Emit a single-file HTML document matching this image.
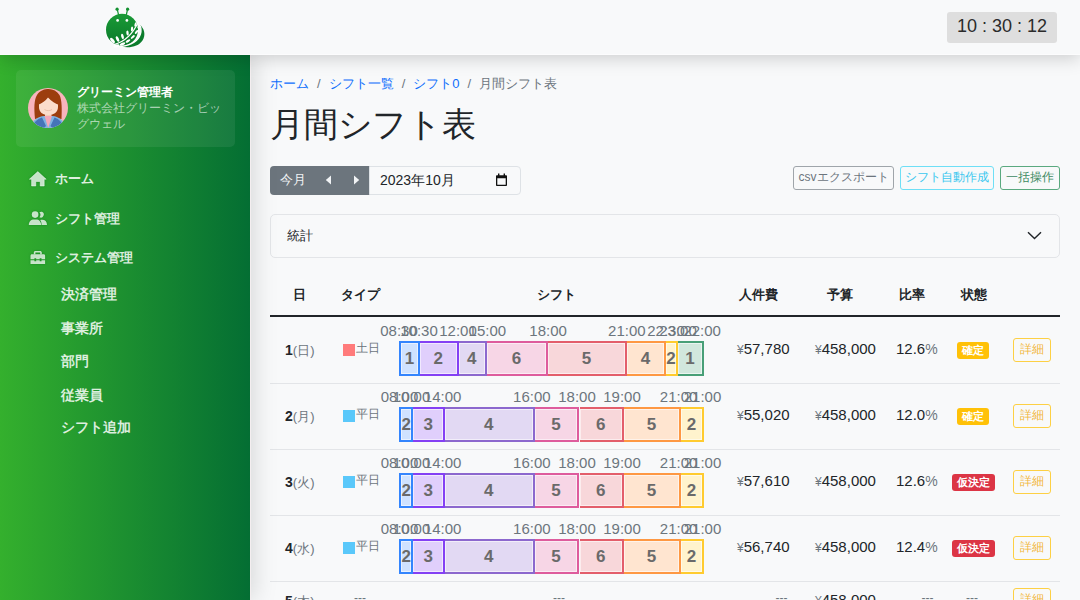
<!DOCTYPE html>
<html><head><meta charset="utf-8">
<style>
*{box-sizing:border-box;margin:0;padding:0}
html,body{width:1080px;height:600px;overflow:hidden}
body{position:relative;background:#f8f9fa;font-family:"Liberation Sans",sans-serif;color:#212529}
.abs{position:absolute}
.nw{white-space:nowrap}
#hdr{left:0;top:0;width:1080px;height:55px;background:#f8f9fa;z-index:5;box-shadow:0 4px 16px rgba(0,0,0,.17);border-bottom:1px solid #fcfcfd}
#clock{left:947px;top:12px;width:110px;height:31px;background:#dedede;border-radius:3px;font-size:18px;color:#2b2b2b;line-height:29px;text-align:center}
#side{left:0;top:55px;width:251px;height:545px;background:linear-gradient(to right,#34b02d,#046e33 250px,#f4eef0 250px);z-index:4;box-shadow:4px 0 22px rgba(0,0,0,.13)}
#card{left:16px;top:15px;width:219px;height:77px;background:rgba(255,255,255,.07);border-radius:5px}
.nm{left:77px;top:29px;font-size:12px;font-weight:bold;color:#fff;white-space:nowrap;line-height:16px}
.co{left:77px;top:45px;font-size:12px;color:rgba(255,255,255,.6);line-height:16px;width:150px}
.mi{left:55px;font-size:13px;font-weight:bold;color:rgba(255,255,255,.85);white-space:nowrap;line-height:16px}
.sm{left:61px;font-size:13.5px;font-weight:bold;color:rgba(255,255,255,.85);white-space:nowrap;line-height:16px}
.ic{left:29px}
.bc{font-size:13px;white-space:nowrap;line-height:18px}
.bc a{color:#0d6efd;text-decoration:none}
.bc .sep{color:#6c757d;padding:0 8px}
.bc .cur{color:#6c757d}
h1{position:absolute;left:270px;top:103px;font-size:34px;letter-spacing:-0.25px;font-weight:normal;line-height:42px;color:#212529;white-space:nowrap}
.bg{left:270px;top:166px;width:100px;height:29px;background:#6c757d;border-radius:4px 0 0 4px}
.din{left:369px;top:166px;width:152px;height:29px;background:#f8f9fa;border:1px solid #dee2e6;border-radius:0 4px 4px 0}
.ob{top:166px;height:24px;border:1px solid;border-radius:3px;font-size:12px;line-height:20px;text-align:center;white-space:nowrap;background:transparent}
.acc{left:270px;top:214px;width:790px;height:44px;border:1px solid #e3e5e8;border-radius:5px;background:#f8f9fa}
.th{top:287px;font-size:13px;font-weight:bold;line-height:16px;white-space:nowrap;color:#212529}
.rl{left:270px;width:790px;height:1px;background:#e3e5e8}
.bar{height:35px;border:2px solid;box-shadow:inset 0 0 0 1px rgba(255,255,255,.55);font-size:17px;font-weight:bold;color:#6a6a6a;text-align:center;line-height:31px;overflow:hidden;white-space:nowrap}
.tl{font-size:15px;color:#6c757d;line-height:16px;white-space:nowrap;transform:translateX(-50%)}
.day{font-size:14px;line-height:16px;white-space:nowrap}
.day b{color:#212529}
.day span{color:#6c757d;font-size:13px}
.typ{font-size:12px;line-height:14px;color:#6c757d;white-space:nowrap}
.sq{width:12px;height:12px}
.num{font-size:15px;line-height:16px;white-space:nowrap;color:#212529}
.num .y{font-size:12px;color:#6c757d;margin-right:0}
.num .p{color:#6c757d;font-size:14px}
.bdg{height:17px;border-radius:3px;font-size:11px;font-weight:bold;color:#fff;text-align:center;line-height:17px;white-space:nowrap}
.det{width:38px;height:24px;border:1px solid rgba(255,193,7,.75);border-radius:3px;font-size:12px;color:rgba(240,165,0,.8);text-align:center;line-height:21px}
.dash{font-size:12px;color:#6c757d;line-height:14px}
</style></head><body>
<div id="hdr" class="abs">
<svg class="abs" style="left:100px;top:2px" width="50" height="50" viewBox="0 0 50 50">
<defs><linearGradient id="lg" x1="0" y1="0" x2="0" y2="1"><stop offset="0" stop-color="#1a9a36"/><stop offset="1" stop-color="#0a7a2b"/></linearGradient></defs>
<circle cx="22" cy="27.8" r="17" fill="#fff" opacity=".7"/>
<line x1="17.4" y1="8" x2="18.6" y2="13" stroke="#139130" stroke-width="1.2"/>
<line x1="27.4" y1="8" x2="26.3" y2="13" stroke="#139130" stroke-width="1.2"/>
<circle cx="17.1" cy="7.2" r="1.6" fill="#139130"/><circle cx="27.6" cy="7.2" r="1.6" fill="#139130"/>
<circle cx="22" cy="27.8" r="16" fill="url(#lg)"/>
<path d="M39.5 22.5 C44.5 26.5 46 33 42.5 38.5 C38.5 44.5 30 46.5 21 44.6 C31 43 38.5 38.5 40.5 32 C41.5 28.5 41 25 39.5 22.5Z" fill="#0b7c2c"/>
<path d="M39.5 22.5 C41 25 41.5 28.5 40.5 32 C38.5 38.5 31 43 21 44.6" stroke="#fff" stroke-width="1.2" fill="none"/>
<circle cx="17.6" cy="18.4" r="1.35" fill="#fff"/><circle cx="26.9" cy="18.4" r="1.35" fill="#fff"/>
<path d="M14 42.5 C22 40.5 32 34 38.5 19.5" stroke="#fff" stroke-width="1.2" fill="none"/>
<g fill="#fff">
<ellipse cx="12.5" cy="38.5" rx="1.5" ry="3.2" transform="rotate(-40 12.5 38.5)"/>
<ellipse cx="17.5" cy="37" rx="1.4" ry="3" transform="rotate(-25 17.5 37)"/>
<ellipse cx="22.5" cy="34.5" rx="1.3" ry="2.8" transform="rotate(-15 22.5 34.5)"/>
<ellipse cx="27.5" cy="31" rx="1.2" ry="2.6" transform="rotate(-5 27.5 31)"/>
<ellipse cx="32" cy="27" rx="1.1" ry="2.4" transform="rotate(5 32 27)"/>
<ellipse cx="35.5" cy="22.5" rx="1" ry="2.2" transform="rotate(15 35.5 22.5)"/>
<ellipse cx="16.5" cy="43.8" rx="1.4" ry="3.2" transform="rotate(75 16.5 43.8)"/>
<ellipse cx="22.5" cy="42" rx="1.3" ry="3" transform="rotate(65 22.5 42)"/>
<ellipse cx="28" cy="39" rx="1.2" ry="2.7" transform="rotate(58 28 39)"/>
<ellipse cx="32.8" cy="35" rx="1.1" ry="2.5" transform="rotate(50 32.8 35)"/>
<ellipse cx="36.5" cy="30" rx="1" ry="2.3" transform="rotate(42 36.5 30)"/>
<ellipse cx="38.8" cy="24.5" rx="0.9" ry="2" transform="rotate(35 38.8 24.5)"/>
</g>
</svg>
<div id="clock" class="abs">10 : 30 : 12</div>
</div>
<div id="side" class="abs">
<div id="card" class="abs"></div>
<svg class="abs" style="left:28px;top:33px" width="40" height="40" viewBox="0 0 40 40">
<defs><clipPath id="cc"><circle cx="20" cy="20" r="20"/></clipPath></defs>
<g clip-path="url(#cc)">
<rect width="40" height="40" fill="#f8b4bd"/>
<path d="M7 31 C6 20 6 12 9 7 C12 2 17 1 20.5 1 C25 1 29 3 31.5 7 C34 12 34 21 33.5 31 L28 30 L12 30Z" fill="#9c3d0e"/>
<rect x="17" y="23" width="6.5" height="7" fill="#f5cdb8"/>
<path d="M2 40 C4 32 10 28.5 16 28 L24.5 28 C30.5 28.5 36 32 38 40 Z" fill="#7fb2e2"/>
<path d="M16.5 28 L20.2 40 L24 28 Z" fill="#f4a6b8"/>
<path d="M4 40 C5 35 9 31 14 29.5 L18 38 L16 40Z M36 40 C35 35 31 31 26.5 29.5 L22.5 38 L24.5 40Z" fill="#4574b8"/>
<path d="M11 14 C11 8 15 5.5 20.3 5.5 C25.5 5.5 30 8 30 14 L30 19 C30 24 26 27 20.3 27 C14.5 27 11 24 11 19Z" fill="#fbdccb"/>
<path d="M9.5 17 C9.5 8 14 3.5 20.5 3.5 C27 3.5 31.5 8 31.5 17 C28 16 23 13 20 9.5 C17.5 13 13.5 15.5 9.5 17Z" fill="#9c3d0e"/>
<path d="M16.5 21.5 C18.5 23 22 23 24 21.5" stroke="#e8b9a0" stroke-width=".8" fill="none"/>
</g></svg>
<div class="abs nm">グリーミン管理者</div>
<div class="abs co">株式会社グリーミン・ビッグウェル</div>
<svg class="abs" style="left:28px;top:115px;filter:drop-shadow(0 0 1px rgba(0,110,20,.7))" width="20" height="18" viewBox="28 170 20 18"><path d="M37.8 171.6 L46.2 179.2 L44.2 179.2 L44.2 186 L40.2 186 L40.2 181.5 L35.8 181.5 L35.8 186 L31.6 186 L31.6 179.2 L29.4 179.2 Z" fill="rgba(255,255,255,.76)" stroke="rgba(255,255,255,.76)" stroke-width=".6" stroke-linejoin="round"/></svg>
<svg class="abs" style="left:28px;top:155px;filter:drop-shadow(0 0 1px rgba(0,110,20,.7))" width="20" height="17" viewBox="28 210 20 17"><g fill="rgba(255,255,255,.76)"><circle cx="35.1" cy="214.6" r="3.3"/><path d="M42 211.8 A2.8 2.8 0 1 1 39.5 217.3 A4.2 4.2 0 0 0 39.5 212.2 A2.8 2.8 0 0 1 42 211.8Z"/><path d="M28.8 225 C28.8 221.5 31 219.5 34 219.5 L36 219.5 C39 219.5 41.1 221.5 41.1 225Z"/><path d="M41.6 225 C41.6 222.5 41 221 40.2 219.9 C40.8 219.7 41.3 219.7 42.2 219.7 C45 219.7 47 221.5 47 225Z"/></g></svg>
<svg class="abs" style="left:28px;top:194px;filter:drop-shadow(0 0 1px rgba(0,110,20,.7))" width="20" height="17" viewBox="28 248 20 17"><g fill="rgba(255,255,255,.76)"><path d="M33.8 253.3 L33.8 251.8 C33.8 250.6 34.5 250 35.6 250 L40 250 C41.1 250 41.8 250.6 41.8 251.8 L41.8 253.3 L40.2 253.3 L40.2 251.5 L35.4 251.5 L35.4 253.3Z"/><path d="M32 253.2 L43.6 253.2 C44.6 253.2 45.1 253.8 45.1 254.8 L45.1 258.2 L41.5 258.2 L41.5 257.2 L39.7 257.2 L39.7 258.2 L36.2 258.2 L36.2 257.2 L34.4 257.2 L34.4 258.2 L30.5 258.2 L30.5 254.8 C30.5 253.8 31 253.2 32 253.2Z"/><path d="M30.5 259.2 L34.4 259.2 L34.4 260.2 L36.2 260.2 L36.2 259.2 L39.7 259.2 L39.7 260.2 L41.5 260.2 L41.5 259.2 L45.1 259.2 L45.1 263 L30.5 263Z"/></g></svg>
<div class="abs mi" style="top:116px">ホーム</div>
<div class="abs mi" style="top:155.5px">シフト管理</div>
<div class="abs mi" style="top:195px">システム管理</div>
<div class="abs sm" style="top:231.5px">決済管理</div>
<div class="abs sm" style="top:265.5px">事業所</div>
<div class="abs sm" style="top:299px">部門</div>
<div class="abs sm" style="top:332.5px">従業員</div>
<div class="abs sm" style="top:364.5px">シフト追加</div>
</div>
<div class="abs bc" style="left:270px;top:75px"><a>ホーム</a><span class="sep">/</span><a>シフト一覧</a><span class="sep">/</span><a>シフト0</a><span class="sep">/</span><span class="cur">月間シフト表</span></div>
<h1>月間シフト表</h1>
<div class="abs bg"></div>
<div class="abs nw" style="left:280px;top:172px;font-size:13px;color:#f1f3f5;line-height:16px">今月</div>
<svg class="abs" style="left:325px;top:175px" width="7" height="10" viewBox="0 0 7 10"><path d="M6 0.5 L6 9.5 L0.8 5Z" fill="#f1f3f5"/></svg>
<svg class="abs" style="left:353px;top:175px" width="7" height="10" viewBox="0 0 7 10"><path d="M1 0.5 L1 9.5 L6.2 5Z" fill="#f1f3f5"/></svg>
<div class="abs din"></div>
<div class="abs nw" style="left:380px;top:172px;font-size:14px;color:#212529;line-height:16px">2023年10月</div>
<svg class="abs" style="left:495px;top:173px" width="13" height="14" viewBox="0 0 13 14"><path d="M1 3.2 C1 2.6 1.5 2.2 2 2.2 L11 2.2 C11.5 2.2 12 2.6 12 3.2 L12 12 C12 12.6 11.5 13 11 13 L2 13 C1.5 13 1 12.6 1 12Z M2.3 5.3 L2.3 11.7 L10.7 11.7 L10.7 5.3Z" fill="#111" fill-rule="evenodd"/><rect x="3" y="0.5" width="1.4" height="2.5" fill="#111"/><rect x="8.6" y="0.5" width="1.4" height="2.5" fill="#111"/></svg>
<div class="abs ob" style="left:793px;width:101px;border-color:#9fa5aa;color:#6c757d">csvエクスポート</div>
<div class="abs ob" style="left:900px;width:94px;border-color:#6edff6;color:#3cc8ef">シフト自動作成</div>
<div class="abs ob" style="left:1000px;width:60px;border-color:#5aa97f;color:#3d8a62">一括操作</div>
<div class="abs acc"></div>
<div class="abs nw" style="left:287px;top:228px;font-size:13px;line-height:16px;color:#212529">統計</div>
<svg class="abs" style="left:1026px;top:230px" width="17" height="11" viewBox="0 0 17 11"><path d="M2 2.2 L8.5 8.6 L15 2.2" stroke="#212529" stroke-width="1.4" fill="none"/></svg>
<div class="abs th" style="left:239px;top:287px;width:120px;text-align:center;">日</div>
<div class="abs th" style="left:300.5px;top:287px;width:120px;text-align:center;">タイプ</div>
<div class="abs th" style="left:496px;top:287px;width:120px;text-align:center;">シフト</div>
<div class="abs th" style="left:698px;top:287px;width:120px;text-align:center;">人件費</div>
<div class="abs th" style="left:779.6px;top:287px;width:120px;text-align:center;">予算</div>
<div class="abs th" style="left:852.3px;top:287px;width:120px;text-align:center;">比率</div>
<div class="abs th" style="left:913.7px;top:287px;width:120px;text-align:center;">状態</div>
<div class="abs" style="left:270px;top:315px;width:790px;height:2px;background:#212529"></div>
<div class="abs rl" style="top:383px"></div>
<div class="abs rl" style="top:449px"></div>
<div class="abs rl" style="top:515px"></div>
<div class="abs rl" style="top:581px"></div>
<div class="abs day" style="left:285px;top:342px"><b>1</b><span>(日)</span></div>
<div class="abs sq" style="left:343px;top:344px;background:#ff7b7b"></div>
<div class="abs typ" style="left:356px;top:341px">土日</div>
<div class="abs bar" style="left:399.1px;top:341.3px;width:21.0px;border-color:rgba(13,110,253,.8);background:#cfe2ff;">1</div>
<div class="abs bar" style="left:420.1px;top:341.3px;width:38.5px;border-color:rgba(102,16,242,.75);background:#e0cffc;border-left:0;">2</div>
<div class="abs bar" style="left:458.6px;top:341.3px;width:28.3px;border-color:rgba(111,66,193,.75);background:#e2d9f3;border-left:0;">4</div>
<div class="abs bar" style="left:486.9px;top:341.3px;width:61.1px;border-color:rgba(214,51,132,.75);background:#f7d6e6;border-left:0;">6</div>
<div class="abs bar" style="left:548px;top:341.3px;width:79.0px;border-color:rgba(220,53,69,.75);background:#f8d7da;border-left:0;">5</div>
<div class="abs bar" style="left:627px;top:341.3px;width:38.9px;border-color:rgba(253,126,20,.75);background:#ffe5d0;border-left:0;">4</div>
<div class="abs bar" style="left:665.9px;top:341.3px;width:12.1px;border-color:rgba(255,193,7,.8);background:#fff3cd;border-left:0;">2</div>
<div class="abs bar" style="left:678px;top:341.3px;width:25.9px;border-color:rgba(25,135,84,.75);background:#d1e7dd;border-left:0;">1</div>
<div class="abs tl" style="left:399px;top:323px">08:30</div>
<div class="abs tl" style="left:419px;top:323px">10:30</div>
<div class="abs tl" style="left:458px;top:323px">12:00</div>
<div class="abs tl" style="left:487.4px;top:323px">15:00</div>
<div class="abs tl" style="left:548.1px;top:323px">18:00</div>
<div class="abs tl" style="left:626.9px;top:323px">21:00</div>
<div class="abs tl" style="left:666px;top:323px">22:30</div>
<div class="abs tl" style="left:678px;top:323px">23:00</div>
<div class="abs tl" style="left:702.2px;top:323px">22:00</div>
<div class="abs num" style="left:737px;top:341px"><span class="y">¥</span>57,780</div>
<div class="abs num" style="left:815px;top:341px"><span class="y">¥</span>458,000</div>
<div class="abs num" style="left:896px;top:341px">12.6<span class="p">%</span></div>
<div class="abs bdg" style="left:956.5px;top:342px;width:32.5px;background:#ffc107">確定</div>
<div class="abs det" style="left:1013px;top:338px">詳細</div>
<div class="abs day" style="left:285px;top:408px"><b>2</b><span>(月)</span></div>
<div class="abs sq" style="left:343px;top:410px;background:#5ac8fa"></div>
<div class="abs typ" style="left:356px;top:407px">平日</div>
<div class="abs bar" style="left:399.2px;top:407.3px;width:14.1px;border-color:rgba(13,110,253,.8);background:#cfe2ff;">2</div>
<div class="abs bar" style="left:413.3px;top:407.3px;width:31.7px;border-color:rgba(102,16,242,.75);background:#e0cffc;border-left:0;">3</div>
<div class="abs bar" style="left:445px;top:407.3px;width:89.6px;border-color:rgba(111,66,193,.75);background:#e2d9f3;border-left:0;">4</div>
<div class="abs bar" style="left:534.6px;top:407.3px;width:44.9px;border-color:rgba(214,51,132,.75);background:#f7d6e6;border-left:0;">5</div>
<div class="abs bar" style="left:579.5px;top:407.3px;width:44.5px;border-color:rgba(220,53,69,.75);background:#f8d7da;border-left:0;">6</div>
<div class="abs bar" style="left:624px;top:407.3px;width:57.2px;border-color:rgba(253,126,20,.75);background:#ffe5d0;border-left:0;">5</div>
<div class="abs bar" style="left:681.2px;top:407.3px;width:22.7px;border-color:rgba(255,193,7,.8);background:#fff3cd;border-left:0;">2</div>
<div class="abs tl" style="left:399.5px;top:389px">08:00</div>
<div class="abs tl" style="left:411.5px;top:389px">10:00</div>
<div class="abs tl" style="left:442.6px;top:389px">14:00</div>
<div class="abs tl" style="left:531.9px;top:389px">16:00</div>
<div class="abs tl" style="left:577px;top:389px">18:00</div>
<div class="abs tl" style="left:622px;top:389px">19:00</div>
<div class="abs tl" style="left:678.6px;top:389px">21:00</div>
<div class="abs tl" style="left:702.5px;top:389px">21:00</div>
<div class="abs num" style="left:737px;top:407px"><span class="y">¥</span>55,020</div>
<div class="abs num" style="left:815px;top:407px"><span class="y">¥</span>458,000</div>
<div class="abs num" style="left:896px;top:407px">12.0<span class="p">%</span></div>
<div class="abs bdg" style="left:956.5px;top:408px;width:32.5px;background:#ffc107">確定</div>
<div class="abs det" style="left:1013px;top:404px">詳細</div>
<div class="abs day" style="left:285px;top:474px"><b>3</b><span>(火)</span></div>
<div class="abs sq" style="left:343px;top:476px;background:#5ac8fa"></div>
<div class="abs typ" style="left:356px;top:473px">平日</div>
<div class="abs bar" style="left:399.2px;top:473.3px;width:14.1px;border-color:rgba(13,110,253,.8);background:#cfe2ff;">2</div>
<div class="abs bar" style="left:413.3px;top:473.3px;width:31.7px;border-color:rgba(102,16,242,.75);background:#e0cffc;border-left:0;">3</div>
<div class="abs bar" style="left:445px;top:473.3px;width:89.6px;border-color:rgba(111,66,193,.75);background:#e2d9f3;border-left:0;">4</div>
<div class="abs bar" style="left:534.6px;top:473.3px;width:44.9px;border-color:rgba(214,51,132,.75);background:#f7d6e6;border-left:0;">5</div>
<div class="abs bar" style="left:579.5px;top:473.3px;width:44.5px;border-color:rgba(220,53,69,.75);background:#f8d7da;border-left:0;">6</div>
<div class="abs bar" style="left:624px;top:473.3px;width:57.2px;border-color:rgba(253,126,20,.75);background:#ffe5d0;border-left:0;">5</div>
<div class="abs bar" style="left:681.2px;top:473.3px;width:22.7px;border-color:rgba(255,193,7,.8);background:#fff3cd;border-left:0;">2</div>
<div class="abs tl" style="left:399.5px;top:455px">08:00</div>
<div class="abs tl" style="left:411.5px;top:455px">10:00</div>
<div class="abs tl" style="left:442.6px;top:455px">14:00</div>
<div class="abs tl" style="left:531.9px;top:455px">16:00</div>
<div class="abs tl" style="left:577px;top:455px">18:00</div>
<div class="abs tl" style="left:622px;top:455px">19:00</div>
<div class="abs tl" style="left:678.6px;top:455px">21:00</div>
<div class="abs tl" style="left:702.5px;top:455px">21:00</div>
<div class="abs num" style="left:737px;top:473px"><span class="y">¥</span>57,610</div>
<div class="abs num" style="left:815px;top:473px"><span class="y">¥</span>458,000</div>
<div class="abs num" style="left:896px;top:473px">12.6<span class="p">%</span></div>
<div class="abs bdg" style="left:952px;top:474px;width:43px;background:#dc3545">仮決定</div>
<div class="abs det" style="left:1013px;top:470px">詳細</div>
<div class="abs day" style="left:285px;top:540px"><b>4</b><span>(水)</span></div>
<div class="abs sq" style="left:343px;top:542px;background:#5ac8fa"></div>
<div class="abs typ" style="left:356px;top:539px">平日</div>
<div class="abs bar" style="left:399.2px;top:539.3px;width:14.1px;border-color:rgba(13,110,253,.8);background:#cfe2ff;">2</div>
<div class="abs bar" style="left:413.3px;top:539.3px;width:31.7px;border-color:rgba(102,16,242,.75);background:#e0cffc;border-left:0;">3</div>
<div class="abs bar" style="left:445px;top:539.3px;width:89.6px;border-color:rgba(111,66,193,.75);background:#e2d9f3;border-left:0;">4</div>
<div class="abs bar" style="left:534.6px;top:539.3px;width:44.9px;border-color:rgba(214,51,132,.75);background:#f7d6e6;border-left:0;">5</div>
<div class="abs bar" style="left:579.5px;top:539.3px;width:44.5px;border-color:rgba(220,53,69,.75);background:#f8d7da;border-left:0;">6</div>
<div class="abs bar" style="left:624px;top:539.3px;width:57.2px;border-color:rgba(253,126,20,.75);background:#ffe5d0;border-left:0;">5</div>
<div class="abs bar" style="left:681.2px;top:539.3px;width:22.7px;border-color:rgba(255,193,7,.8);background:#fff3cd;border-left:0;">2</div>
<div class="abs tl" style="left:399.5px;top:521px">08:00</div>
<div class="abs tl" style="left:411.5px;top:521px">10:00</div>
<div class="abs tl" style="left:442.6px;top:521px">14:00</div>
<div class="abs tl" style="left:531.9px;top:521px">16:00</div>
<div class="abs tl" style="left:577px;top:521px">18:00</div>
<div class="abs tl" style="left:622px;top:521px">19:00</div>
<div class="abs tl" style="left:678.6px;top:521px">21:00</div>
<div class="abs tl" style="left:702.5px;top:521px">21:00</div>
<div class="abs num" style="left:737px;top:539px"><span class="y">¥</span>56,740</div>
<div class="abs num" style="left:815px;top:539px"><span class="y">¥</span>458,000</div>
<div class="abs num" style="left:896px;top:539px">12.4<span class="p">%</span></div>
<div class="abs bdg" style="left:952px;top:540px;width:43px;background:#dc3545">仮決定</div>
<div class="abs det" style="left:1013px;top:536px">詳細</div>
<div class="abs day" style="left:285px;top:593px"><b>5</b><span>(木)</span></div>
<div class="abs dash" style="left:354px;top:591px">---</div>
<div class="abs dash" style="left:553px;top:591px">---</div>
<div class="abs dash" style="left:775.5px;top:591px">---</div>
<div class="abs dash" style="left:921.5px;top:591px">---</div>
<div class="abs dash" style="left:966px;top:591px">---</div>
<div class="abs num" style="left:815px;top:592px"><span class="y">¥</span>458,000</div>
<div class="abs det" style="left:1013px;top:588px">詳細</div>
</body></html>
